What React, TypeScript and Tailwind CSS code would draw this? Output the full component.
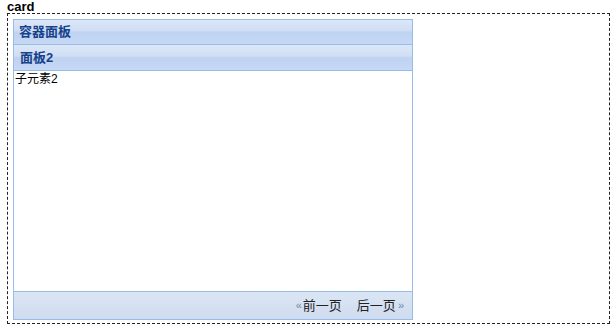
import React from "react";

export default function App() {
  const font = { fontFamily: '"Liberation Sans", Tahoma, "Noto Sans CJK SC", sans-serif' };
  return (
    <div className="w-[616px] h-[332px] bg-white text-[12px] text-black" style={font}>
      <div className="pl-[7px] h-[13px] leading-[13px] font-bold text-[13px] overflow-visible">card</div>
      <div className="ml-[7px] w-[603px] h-[311px] border border-dashed border-[#222] p-[5px]">
        <div className="w-[400px] h-[301px] border border-[#99bbe8] flex flex-col">
          <div className="h-[25px] border-b border-[#99bbe8] bg-[linear-gradient(#dce8f8_0%,#d0def4_45%,#bfd3f2_50%,#c5d8f4_100%)] pl-[5px] flex items-center font-bold text-[13px] text-[#15428b]">
            容器面板
          </div>
          <div className="h-[26px] border-b border-[#99bbe8] bg-[linear-gradient(#dce8f8_0%,#d0def4_45%,#bfd3f2_50%,#c5d8f4_100%)] pl-[6px] flex items-center font-bold text-[13px] text-[#15428b]">
            面板2
          </div>
          <div className="flex-1 bg-white pl-[1px] pt-[1px] leading-[14px]">子元素2</div>
          <div className="h-[28px] border-t border-[#99bbe8] bg-[linear-gradient(#dbe5f4,#cfdcef)] flex items-center justify-end pr-[8px] gap-[15px] text-[13px] text-[#222]">
            <span className="flex items-center">
              <span className="text-[11px] text-[#6f86a8] mr-[1px]">«</span>前一页
            </span>
            <span className="flex items-center">
              后一页<span className="text-[11px] text-[#6f86a8] ml-[2px]">»</span>
            </span>
          </div>
        </div>
      </div>
    </div>
  );
}
